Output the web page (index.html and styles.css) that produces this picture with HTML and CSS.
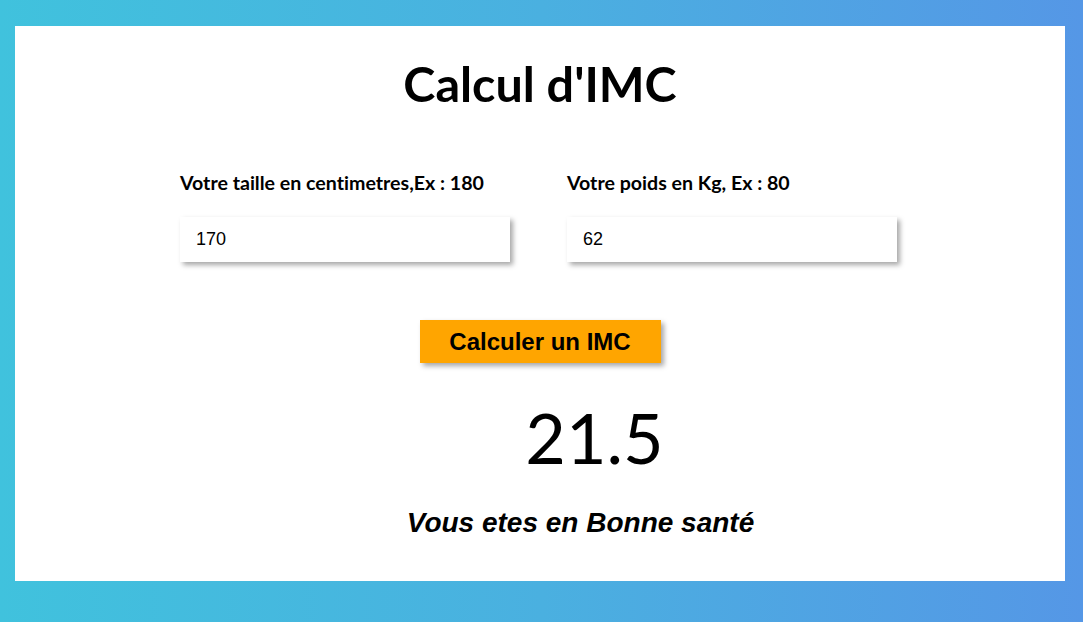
FILE: index.html
```html
<!DOCTYPE html>
<html lang="fr">
<head>
<meta charset="utf-8">
<title>Calcul d'IMC</title>
<link rel="stylesheet" href="styles.css">
</head>
<body>
<main class="card">
  <h1 class="title">Calcul d'IMC</h1>
  <div class="fields">
    <div class="field">
      <label class="label" for="taille">Votre taille en centimetres,Ex : 180</label>
      <input class="input" id="taille" type="text" value="170">
    </div>
    <div class="field">
      <label class="label" for="poids">Votre poids en Kg, Ex : 80</label>
      <input class="input" id="poids" type="text" value="62">
    </div>
  </div>
  <button class="btn" type="button">Calculer un IMC</button>
  <div class="result">21.5</div>
  <p class="verdict">Vous etes en Bonne santé</p>
</main>
</body>
</html>
```

FILE: styles.css
```css
html, body {
  margin: 0;
  height: 100%;
}
body {
  box-sizing: border-box;
  padding: 26px 18px 41px 15px;
  background: linear-gradient(90deg, #40c2dd 0%, #4ab0e0 50%, #5597e6 100%);
  font-family: "Lato", "Liberation Sans", Arial, sans-serif;
  font-variant-ligatures: none;
  color: #000;
}
.card {
  box-sizing: border-box;
  height: 555px;
  background: #fff;
  display: flex;
  flex-direction: column;
  align-items: center;
  padding-top: 28px;
}
.title {
  margin: 0;
  font-size: 48.5px;
  line-height: 58px;
  font-weight: 700;
}
.fields {
  display: flex;
  gap: 57px;
  margin-top: 59px;
  margin-left: -3px;
}
.field {
  display: flex;
  flex-direction: column;
  width: 330px;
}
.label {
  font-size: 19.6px;
  line-height: 24px;
  font-weight: 700;
  white-space: nowrap;
}
.input {
  margin-top: 22px;
  box-sizing: border-box;
  width: 330px;
  height: 45px;
  border: none;
  outline: none;
  padding: 0 16px;
  font-family: "Liberation Sans", Arial, sans-serif;
  font-size: 18px;
  color: #000;
  background: #fff;
  box-shadow: 3px 3px 5px rgba(0, 0, 0, 0.35);
}
.btn {
  margin-top: 58px;
  box-sizing: border-box;
  width: 241px;
  height: 43px;
  border: none;
  background: #ffa500;
  font-family: "Liberation Sans", Arial, sans-serif;
  font-weight: 700;
  font-size: 24px;
  color: #000;
  box-shadow: 3px 3px 5px rgba(0, 0, 0, 0.35);
  padding: 0;
}
.result {
  margin-top: 32px;
  margin-left: 109px;
  font-size: 70px;
  line-height: 84px;
  font-weight: 400;
}
.verdict {
  margin: 28px 0 0 81px;
  font-family: "Liberation Sans", Arial, sans-serif;
  font-size: 28px;
  line-height: 32px;
  font-weight: 700;
  font-style: italic;
}
```
